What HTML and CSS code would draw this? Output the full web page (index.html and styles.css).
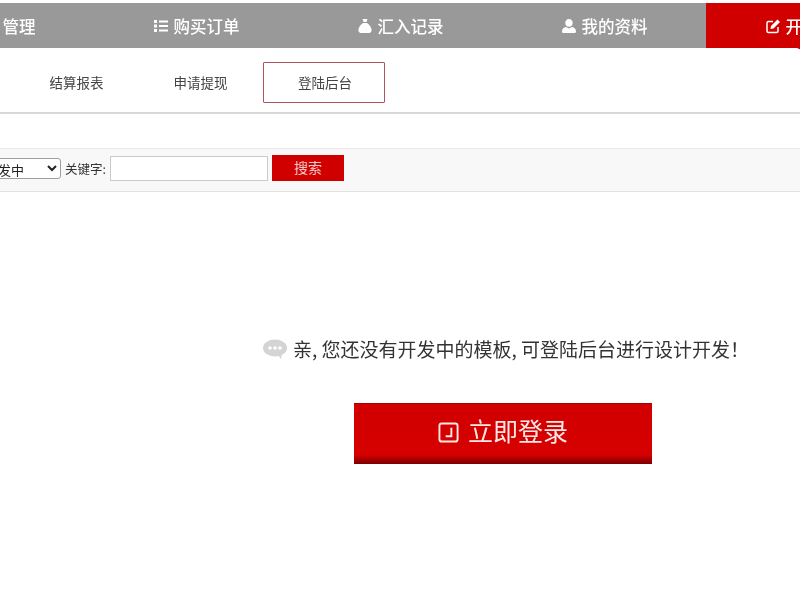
FILE: index.html
```html
<!DOCTYPE html>
<html lang="zh-CN">
<head>
<meta charset="utf-8">
<title>开发中的模板</title>
<link rel="stylesheet" href="styles.css">
</head>
<body>
<div class="page">
  <nav class="nav">
    <a class="nav-item"><svg class="nav-icon" viewBox="0 0 16 16"><path fill="currentColor" d="M1 2h3v3H1zM6 2.500h9v2H6zM1 6.500h3v3H1zM6 7h9v2H6zM1 11h3v3H1zM6 11.500h9v2H6z"/></svg><span>项目管理</span></a>
    <a class="nav-item"><svg class="nav-icon" viewBox="0 0 16 16"><path fill="currentColor" d="M1 2h3v3H1zM6 2.500h9v2H6zM1 6.500h3v3H1zM6 7h9v2H6zM1 11h3v3H1zM6 11.500h9v2H6z"/></svg><span>购买订单</span></a>
    <a class="nav-item"><svg class="nav-icon" viewBox="0 0 16 16"><path fill="currentColor" d="M5.500 1h5l-1 3h-3zM6 5h4c2.500 1.500 5 5 4.500 8 -.3 1.500-1.500 2-3 2h-7c-1.500 0-2.700-.5-3-2C1 10 3.500 6.500 6 5z"/></svg><span>汇入记录</span></a>
    <a class="nav-item"><svg class="nav-icon" viewBox="0 0 16 16"><path fill="currentColor" d="M8 1a3.700 3.700 0 0 1 3.700 4A3.700 3.700 0 0 1 4.300 5 3.700 3.700 0 0 1 8 1zM5 9l3 1.500L11 9c2.500.3 4 2 4 4.500 0 1-.8 1.500-2 1.500H3c-1.200 0-2-.5-2-1.500C1 11 2.500 9.300 5 9z"/></svg><span>我的资料</span></a>
    <a class="nav-item nav-item-active"><svg class="nav-icon" viewBox="0 0 16 16"><path fill="none" stroke="currentColor" stroke-width="1.500" d="M13 9v4a1.500 1.500 0 0 1-1.500 1.500h-8A1.500 1.500 0 0 1 2 13V5a1.500 1.500 0 0 1 1.500-1.500H8"/><path fill="currentColor" d="M12.500 1.500l2.500 2.500-6.500 6.500-3 .5.500-3z"/></svg><span>开发模板</span></a>
  </nav>

  <div class="subnav">
    <a class="sub-item">结算报表</a>
    <a class="sub-item">申请提现</a>
    <a class="sub-item sub-item-active">登陆后台</a>
  </div>

  <form class="filter">
    <select class="filter-select"><option>开发中</option></select>
    <label class="filter-label">关键字:</label>
    <input class="filter-input" type="text">
    <button class="filter-button" type="button">搜索</button>
  </form>

  <main class="empty">
    <p class="empty-message">
      <svg class="empty-icon" viewBox="0 0 24 20"><ellipse cx="12" cy="9" rx="12" ry="8.500" fill="#d4d4d4"/><path fill="#d4d4d4" d="M14 15l4 5 1-6z"/><circle cx="7" cy="9" r="1.800" fill="#fff"/><circle cx="12" cy="9" r="1.800" fill="#fff"/><circle cx="17" cy="9" r="1.800" fill="#fff"/></svg>
      <span>亲, 您还没有开发中的模板, 可登陆后台进行设计开发！</span>
    </p>
    <a class="login-button"><svg class="login-icon" viewBox="0 0 22 22"><rect x="1.500" y="1.500" width="19" height="19" rx="2.500" fill="none" stroke="currentColor" stroke-width="2"/><path fill="none" stroke="currentColor" stroke-width="2" d="M14 6v9H8"/></svg><span class="login-text">立即登录</span></a>
  </main>
</div>
</body>
</html>
```
FILE: styles.css
```css
html, body {
  margin: 0;
  padding: 0;
  background: #fff;
}
body {
  width: 800px;
  height: 600px;
  overflow: hidden;
  font-family: "Noto Sans CJK SC", "Liberation Sans", sans-serif;
  color: #333;
}
.page {
  width: 800px;
  height: 600px;
  padding-top: 3px;
  box-sizing: border-box;
  filter: blur(0.7px);
}
.nav {
  display: flex;
  width: 1020px;
  height: 45px;
  margin-left: -110px;
  background: #999;
}
.nav-item {
  position: relative;
  display: flex;
  align-items: center;
  justify-content: center;
  width: 204px;
  color: #fff;
  font-size: 16.500px;
  font-weight: 500;
}
.nav-item-active {
  background: #d10000;
}
.nav-item-active::after {
  content: "";
  position: absolute;
  top: 45px;
  left: 50%;
  margin-left: -11px;
  border: 5px solid transparent;
  border-width: 5px 11px 0;
  border-top-color: #d10000;
}
.nav-icon {
  width: 16px;
  height: 16px;
  margin-right: 5px;
}
.subnav {
  display: flex;
  gap: 1px;
  height: 66px;
  padding: 14px 0 0 15px;
  box-sizing: border-box;
  border-bottom: 2px solid #d8d8d8;
}
.sub-item {
  display: flex;
  align-items: center;
  justify-content: center;
  width: 123px;
  height: 41px;
  padding-bottom: 2px;
  box-sizing: border-box;
  font-size: 13.500px;
  color: #444;
}
.sub-item-active {
  width: 122px;
  padding-left: 2px;
  border: 1px solid #b5525f;
  border-radius: 1px;
}
.filter {
  display: flex;
  align-items: center;
  height: 44px;
  margin-top: 34px;
  padding-bottom: 3px;
  box-sizing: border-box;
  background: #f8f8f8;
  border-top: 1px solid #e8e8e8;
  border-bottom: 1px solid #e2e2e2;
}
.filter-select {
  width: 81px;
  height: 21px;
  margin: 0 0 0 -20px;
  padding: 0;
  background: #fff;
  border: 1px solid #9a9fa8;
  border-radius: 3px;
  font: 13px "Noto Sans CJK SC", sans-serif;
  color: #222;
}
.filter-label {
  margin-left: 4px;
  width: 41px;
  font-size: 12.500px;
  white-space: nowrap;
  color: #333;
}
.filter-input {
  width: 158px;
  height: 25px;
  margin: 0 0 0 4px;
  padding: 0;
  box-sizing: border-box;
  background: #fff;
  border: 1px solid #c6cbd2;
}
.filter-button {
  width: 72px;
  height: 26px;
  margin: 0 0 2px 4px;
  padding: 0 0 2px;
  background: #d10000;
  border: 0;
  font: 14px "Noto Sans CJK SC", sans-serif;
  color: #f3c8c8;
}
.empty {
  display: flex;
  flex-direction: column;
  padding-left: 263px;
}
.empty-message {
  display: flex;
  align-items: center;
  height: 26px;
  margin: 144px 0 0;
  font-size: 19px;
  line-height: 26px;
  color: #333;
  white-space: nowrap;
}
.empty-icon {
  width: 24px;
  height: 20px;
  margin-right: 6px;
}
.login-button {
  display: flex;
  align-items: center;
  justify-content: center;
  width: 298px;
  height: 61px;
  margin: 41px 0 0 91px;
  padding-bottom: 4px;
  box-sizing: border-box;
  background: linear-gradient(#d10000 0, #d60000 85%, #7a0000 100%);
  border-top: 1px solid #a80000;
  font-size: 25px;
  color: #fde8e8;
}
.login-icon {
  width: 21px;
  height: 21px;
  margin-right: 9px;
}
.login-text {
  margin-bottom: 4px;
}
```
